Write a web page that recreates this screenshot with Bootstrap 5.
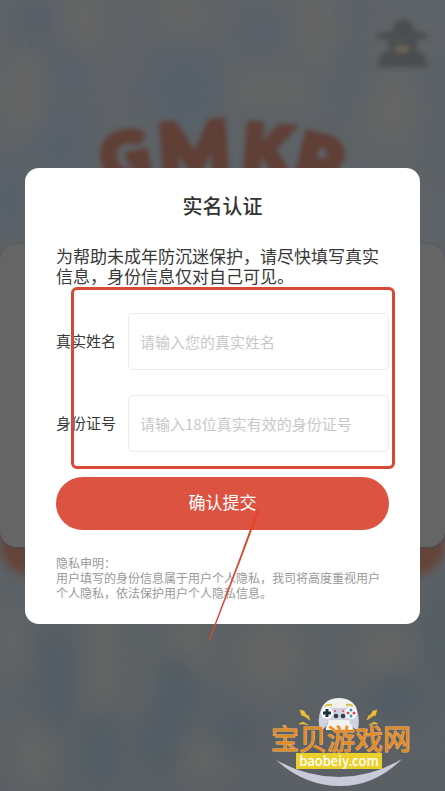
<!DOCTYPE html>
<html lang="zh-CN">
<head>
<meta charset="utf-8">
<meta name="viewport" content="width=device-width, initial-scale=1">
<title>实名认证</title>
<link href="https://cdn.jsdelivr.net/npm/bootstrap@5.3.0/dist/css/bootstrap.min.css" rel="stylesheet">
<style>
  body { font-family: "Noto Sans CJK SC", sans-serif; color: #383838; background: #5f6467; }
  .scene { isolation: isolate; }
  .backdrop-art { z-index: -2; }
  .back-panel { z-index: -1; }
  .back-sheet { height: 303px; background: #656565; border-radius: 16px; box-shadow: 0 1px 3px #45494c; position: relative; }
  .back-sheet::before { content: ""; position: absolute; z-index: -1; left: 0; right: 0; bottom: -28px; height: 60px; border-radius: 30px; background: #65443a; filter: blur(4px); }
  .verify-card { margin: 0 25px; padding: 26px 31px 24px; border-radius: 14px; }
  .verify-title { font-size: 20px; line-height: 24px; font-weight: 500; margin-bottom: 28px; color: #333; }
  .verify-lead { font-size: 17px; line-height: 20px; margin-bottom: 27px; }
  .field-stack { gap: 25px; margin-bottom: 25px; }
  .field-name { width: 72px; font-size: 15px; line-height: 20px; }
  .field-box { height: 57px; font-size: 15px; padding: 0 11px; border: 1px solid #ececec; border-radius: 5px; }
  .field-box::placeholder { color: #c8c8c8; opacity: 1; }
  .field-outline { inset: -26px -6px -17px 15px; border: 3px solid #d64a35; border-radius: 6px; }
  .submit-btn { height: 53px; font-size: 17px; line-height: 24px; padding: 0 0 2px; color: #fff; background: #dc5441; margin-bottom: 25px; }
  .submit-btn:hover { color: #fff; background: #c94835; }
  .privacy-note { font-size: 12px; line-height: 15px; color: #999; }
  .pointer-line { left: 183px; top: 340px; }
  .site-mark { right: 25px; bottom: 0; }
</style>
<script src="https://cdn.jsdelivr.net/npm/bootstrap@5.3.0/dist/js/bootstrap.bundle.min.js"></script>
</head>
<body>
<main class="scene position-relative min-vh-100 d-flex flex-column justify-content-center overflow-hidden">

  <svg class="backdrop-art position-absolute top-0 start-0 w-100 h-100" viewBox="0 0 445 791" preserveAspectRatio="xMidYMin slice" aria-hidden="true">
    <defs>
      <filter id="haze" x="-60%" y="-60%" width="220%" height="220%" color-interpolation-filters="sRGB"><feGaussianBlur stdDeviation="12"/></filter>
      <filter id="soft" x="-30%" y="-30%" width="160%" height="160%" color-interpolation-filters="sRGB"><feGaussianBlur stdDeviation="2.5"/></filter>
      <linearGradient id="wash" x1="0" y1="0" x2="0" y2="1"><stop offset="0" stop-color="#5e6367"/><stop offset=".8" stop-color="#5b6165"/><stop offset="1" stop-color="#5b6065"/></linearGradient>
    </defs>
    <rect width="445" height="791" fill="url(#wash)"/>
    <g filter="url(#haze)" opacity=".75">
      <g fill="#56606c">
        <ellipse cx="35" cy="15" rx="18" ry="20"/><ellipse cx="65" cy="60" rx="16" ry="45"/><ellipse cx="60" cy="140" rx="25" ry="40"/>
        <ellipse cx="185" cy="90" rx="38" ry="42"/><ellipse cx="260" cy="32" rx="18" ry="20"/><ellipse cx="348" cy="75" rx="13" ry="38"/>
        <ellipse cx="10" cy="200" rx="20" ry="40"/><ellipse cx="440" cy="110" rx="9" ry="60"/><ellipse cx="355" cy="10" rx="12" ry="15"/>
      </g>
      <g fill="#676664">
        <ellipse cx="82" cy="20" rx="24" ry="34"/><ellipse cx="182" cy="12" rx="26" ry="24"/><ellipse cx="24" cy="95" rx="25" ry="42"/>
        <ellipse cx="318" cy="28" rx="22" ry="44"/><ellipse cx="392" cy="110" rx="28" ry="42"/><ellipse cx="270" cy="90" rx="45" ry="18"/>
        <ellipse cx="103" cy="655" rx="18" ry="60"/><ellipse cx="10" cy="640" rx="14" ry="40"/><ellipse cx="190" cy="645" rx="22" ry="38"/>
        <ellipse cx="150" cy="695" rx="9" ry="40"/><ellipse cx="270" cy="655" rx="34" ry="38"/><ellipse cx="385" cy="655" rx="30" ry="35"/>
        <ellipse cx="35" cy="755" rx="20" ry="35"/><ellipse cx="205" cy="758" rx="24" ry="22"/>
      </g>
      <g fill="#4c5a64">
        <ellipse cx="175" cy="690" rx="20" ry="34"/><ellipse cx="160" cy="740" rx="16" ry="34"/><ellipse cx="55" cy="680" rx="13" ry="55"/>
        <ellipse cx="395" cy="695" rx="22" ry="22"/><ellipse cx="100" cy="752" rx="16" ry="35"/><ellipse cx="440" cy="640" rx="9" ry="50"/><ellipse cx="235" cy="735" rx="16" ry="22"/>
      </g>
    </g>
    <g filter="url(#soft)" fill="#545e64" opacity=".5">
      <path d="M13 13h9v7h-9zM27 13h9v7h-9zM41 13h8v7h-8zM13 27h9v7h-9zM27 27h9v7h-9zM41 27h8v7h-8zM13 41h9v7h-9zM27 41h9v7h-9zM41 41h8v7h-8z"/>
    </g>
    <g filter="url(#soft)">
      <path d="M393 31q1-11 10-12 10 1 11 12l13 3v5h-51v-5z" fill="#4b4d4e"/>
      <path d="M377 67l4-13 9-4-3-10h31l-2 10 8 4 4 13z" fill="#4a4d4f"/>
      <ellipse cx="402" cy="49" rx="8" ry="4" fill="#6e6657"/>
    </g>
    <g filter="url(#soft)" fill="#5f3f36" stroke="#5f3f36" stroke-width="7" font-family="Lato, sans-serif" font-weight="900">
      <text transform="translate(107 184) rotate(-12)" font-size="64">G</text>
      <text transform="translate(161 179) rotate(-4)" font-size="74">M</text>
      <text transform="translate(241 173) rotate(5)" font-size="68">K</text>
      <text transform="translate(291 181) rotate(14)" font-size="70">P</text>
    </g>
  </svg>

  <div class="back-panel position-absolute top-0 start-0 w-100 h-100 d-flex flex-column justify-content-center" aria-hidden="true">
    <div class="back-sheet"></div>
  </div>

  <section class="verify-card bg-white position-relative" role="dialog" aria-labelledby="verify-title">
    <h1 class="verify-title text-center" id="verify-title">实名认证</h1>
    <p class="verify-lead">为帮助未成年防沉迷保护，请尽快填写真实信息，身份信息仅对自己可见。</p>
    <form>
      <div class="field-stack d-flex flex-column position-relative">
        <div class="d-flex align-items-center">
          <label class="field-name flex-shrink-0" for="real-name">真实姓名</label>
          <input class="field-box form-control" id="real-name" type="text" placeholder="请输入您的真实姓名">
        </div>
        <div class="d-flex align-items-center">
          <label class="field-name flex-shrink-0" for="id-number">身份证号</label>
          <input class="field-box form-control" id="id-number" type="text" placeholder="请输入18位真实有效的身份证号">
        </div>
        <div class="field-outline position-absolute pe-none"></div>
      </div>
      <button class="submit-btn btn rounded-pill w-100 border-0 d-block" type="button">确认提交</button>
    </form>
    <p class="privacy-note mb-0">隐私申明：<br>用户填写的身份信息属于用户个人隐私，我司将高度重视用户个人隐私，依法保护用户个人隐私信息。</p>
    <svg class="pointer-line position-absolute pe-none" width="54" height="134" viewBox="0 0 54 134" aria-hidden="true">
      <path d="M49 2L51 3L35 46L2 132L1 131L33 46Z" fill="#d94a34"/>
      <path d="M49 2L51 3L44 22H42Z" fill="#ec432c"/>
    </svg>
  </section>

  <svg class="site-mark position-absolute" width="155" height="100" viewBox="265 691 155 100" role="img" aria-label="宝贝游戏网 baobeiy.com">
    <path d="M276 760Q307 777 339 777T402 759Q375 786 340 786T276 760Z" fill="#c9cad9"/>
    <ellipse cx="339" cy="712" rx="18" ry="14" fill="#f1f1ee"/>
    <path d="M325 706q3-2 7-1M346 705q4-1 7 1" stroke="#d8bd48" stroke-width="2" fill="none"/>
    <path d="M321 709q5-4 12-1h12q8-3 12 2 3 10 1 19-5 2-9-9h-20q-5 12-9 9-3-9 1-20z" fill="#d1d2e0"/>
    <path d="M326 730q-1-10 13-10t14 10z" fill="#f2f2ef"/>
    <circle cx="327" cy="713" r="6" fill="#fbfbfb"/><circle cx="351" cy="713" r="6" fill="#fbfbfb"/>
    <path d="M327 709v8M323 713h8" stroke="#19323d" stroke-width="3"/>
    <circle cx="351" cy="710" r="1.5" fill="#2c9cc4"/><circle cx="351" cy="716" r="1.5" fill="#2c9cc4"/><circle cx="348" cy="713" r="1.5" fill="#d94550"/><circle cx="354" cy="713" r="1.5" fill="#d94550"/>
    <circle cx="335" cy="711" r="1" fill="#d9476a"/><circle cx="343" cy="711" r="1" fill="#d9476a"/>
    <circle cx="336" cy="716" r="2.3" fill="#29424e"/><circle cx="343" cy="716" r="2.3" fill="#29424e"/>
    <path d="M300 710l4 1 3 5 1-1 2 5-6-4 0-1-2 1zM377 710l-4 1-3 5-1-1-2 5 6-4 0-1 2 1zM299 724l4-2 5 3-4-1zM378 724l-4-2-5 3 4-1z" fill="#efbd31" stroke="#efbd31" stroke-width=".6"/>
    <text x="341" y="750" text-anchor="middle" font-family="Noto Sans CJK SC, sans-serif" font-size="28" font-weight="400" fill="#e58a20" stroke="#efb877" stroke-width="1" paint-order="stroke">宝贝游戏网</text>
    <rect x="296" y="753" width="86" height="16" fill="#ebcf2b"/>
    <text x="339" y="766" text-anchor="middle" font-family="Noto Sans CJK SC, sans-serif" font-size="13" font-weight="500" fill="#fff">baobeiy.com</text>
  </svg>
</main>
</body>
</html>
